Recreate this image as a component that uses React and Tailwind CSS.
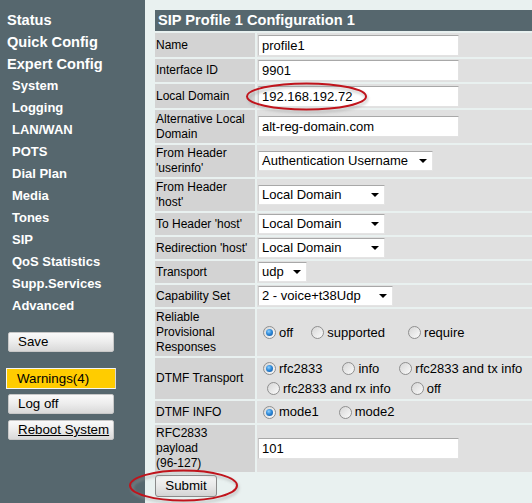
import React from "react";

const navTop = "h-[22px] leading-[22px] pl-[7px] text-[14.6px] font-bold text-white";
const navSub = "h-[22px] leading-[22px] pl-[12px] text-[13px] font-bold text-white";

function SideButton({ children, underline }) {
  return (
    <div className="ml-[8px] w-[106px] h-[20px] rounded-[2px] border border-[#c8c8c8] bg-gradient-to-b from-[#fafafa] via-[#ececec] to-[#d9d9d9] pl-[9px] text-[13.33px] leading-[18px] text-black">
      <span className={underline ? "underline" : ""}>{children}</span>
    </div>
  );
}

function Input({ value, w = "w-[201px]" }) {
  return (
    <div className={`${w} h-[21px] bg-white border border-[#e2e2e2] border-t-[#a8a8a8] border-l-[#c9c9c9] pl-[3px] text-[13px] leading-[19px] text-black`}>
      {value}
    </div>
  );
}

function Select({ value, w }) {
  return (
    <div className={`${w} h-[20px] bg-white border border-[#e4e4e4] border-t-[#a8a8a8] border-l-[#cfcfcf] pl-[3px] pr-[5px] flex items-center justify-between text-[13px] text-black`}>
      <span className="leading-[18px] whitespace-nowrap">{value}</span>
      <svg width="8" height="4" viewBox="0 0 8 4" className="shrink-0">
        <path d="M0 0 L8 0 L4 4 Z" fill="#000" />
      </svg>
    </div>
  );
}

function Radio({ checked, label, className = "" }) {
  return (
    <span className={`inline-flex items-center whitespace-nowrap ${className}`}>
      <span className="ml-[5px] mr-[3px] w-[13px] h-[13px] rounded-full border border-[#8f8f8f] bg-gradient-to-br from-[#d6d6d6] to-[#fbfbfb] flex items-center justify-center shrink-0">
        {checked && (
          <span className="w-[7px] h-[7px] rounded-full bg-[radial-gradient(circle_at_40%_35%,#8fd0ff_0%,#2f8ad8_45%,#0f4f9a_100%)]" />
        )}
      </span>
      <span className="text-[13px] text-black leading-[16px]">{label}</span>
    </span>
  );
}

function Row({ h, label, children }) {
  return (
    <>
      <div className={`${h} bg-[#d3d3d3] pl-[1px] pr-[2px] flex items-center text-[12px] leading-[15px] text-black`}>
        <div>{label}</div>
      </div>
      <div className={`${h} bg-[#e0e0e0] pl-[1px] flex items-center`}>{children}</div>
    </>
  );
}

export default function App() {
  return (
    <div className="relative w-[532px] h-[503px] overflow-hidden flex font-['Liberation_Sans',Arial,sans-serif]">
      <aside className="w-[145px] shrink-0 bg-[#56676e] pt-[9px]">
        <div className={navTop}>Status</div>
        <div className={navTop}>Quick Config</div>
        <div className={navTop}>Expert Config</div>
        <div className={navSub}>System</div>
        <div className={navSub}>Logging</div>
        <div className={navSub}>LAN/WAN</div>
        <div className={navSub}>POTS</div>
        <div className={navSub}>Dial Plan</div>
        <div className={navSub}>Media</div>
        <div className={navSub}>Tones</div>
        <div className={navSub}>SIP</div>
        <div className={navSub}>QoS Statistics</div>
        <div className={navSub}>Supp.Services</div>
        <div className={navSub}>Advanced</div>
        <div className="mt-[15px]">
          <SideButton>Save</SideButton>
        </div>
        <div className="mt-[16px] ml-[6px] w-[110px] h-[21px] bg-[#ffcc00] border border-[#f4f4f4] border-r-[#d8d8d8] pl-[10px] text-[13.33px] leading-[19px] text-black">
          Warnings(4)
        </div>
        <div className="mt-[5px]">
          <SideButton>Log off</SideButton>
        </div>
        <div className="mt-[6px]">
          <SideButton underline>Reboot System</SideButton>
        </div>
      </aside>

      <main className="flex-1 bg-[#e9f1f0] pl-[10px] pt-[10px]">
        <div className="grid grid-cols-[100px_1fr] gap-[2px]">
          <div className="col-span-2 h-[21px] bg-[#56676e] pl-[3px] text-[14.6px] font-bold text-white leading-[21px] whitespace-nowrap">
            SIP Profile 1 Configuration 1
          </div>
          <Row h="h-[24px]" label="Name"><Input value="profile1" /></Row>
          <Row h="h-[23px]" label="Interface ID"><Input value="9901" /></Row>
          <Row h="h-[24px]" label="Local Domain"><Input value="192.168.192.72" /></Row>
          <Row h="h-[33px]" label="Alternative Local Domain"><Input value="alt-reg-domain.com" /></Row>
          <Row h="h-[32px]" label={<>From Header<br />'userinfo'</>}>
            <Select value="Authentication Username" w="w-[175px]" />
          </Row>
          <Row h="h-[32px]" label={<>From Header<br />'host'</>}>
            <Select value="Local Domain" w="w-[127px]" />
          </Row>
          <Row h="h-[22px]" label="To Header 'host'">
            <Select value="Local Domain" w="w-[127px]" />
          </Row>
          <Row h="h-[22px]" label="Redirection 'host'">
            <Select value="Local Domain" w="w-[127px]" />
          </Row>
          <Row h="h-[22px]" label="Transport">
            <Select value="udp" w="w-[49px]" />
          </Row>
          <Row h="h-[22px]" label="Capability Set">
            <Select value="2 - voice+t38Udp" w="w-[135px]" />
          </Row>
          <Row h="h-[47px]" label={<>Reliable<br />Provisional<br />Responses</>}>
            <div className="flex items-center gap-[13px]">
              <Radio checked label="off" />
              <Radio label="supported" />
              <Radio label="require" className="ml-[5px]" />
            </div>
          </Row>
          <Row h="h-[41px]" label="DTMF Transport">
            <div className="flex flex-col">
              <div className="flex items-center h-[20px] gap-[15px]">
                <Radio checked label="rfc2833" />
                <Radio label="info" />
                <Radio label="rfc2833 and tx info" />
              </div>
              <div className="flex items-center h-[20px] gap-[15px] pl-[4px]">
                <Radio label="rfc2833 and rx info" />
                <Radio label="off" />
              </div>
            </div>
          </Row>
          <Row h="h-[22px]" label="DTMF INFO">
            <div className="flex items-center gap-[15px]">
              <Radio checked label="mode1" />
              <Radio label="mode2" />
            </div>
          </Row>
          <Row h="h-[47px]" label={<>RFC2833<br />payload<br />(96-127)</>}>
            <Input value="101" />
          </Row>
        </div>
        <div className="mt-[3px] w-[62px] h-[22px] rounded-[3px] border border-[#8a8a8a] bg-gradient-to-b from-[#f6f6f6] via-[#e8e8e8] to-[#d4d4d4] text-center text-[13.33px] leading-[20px] text-black">
          Submit
        </div>
      </main>

      <svg className="absolute inset-0 pointer-events-none" width="532" height="503" viewBox="0 0 532 503">
        <defs>
          <filter id="sh" x="-20%" y="-50%" width="140%" height="200%">
            <feGaussianBlur stdDeviation="1.5" />
          </filter>
        </defs>
        <ellipse cx="308" cy="99" rx="59" ry="13" fill="none" stroke="#9a9a9a" strokeWidth="2" opacity="0.6" filter="url(#sh)" />
        <ellipse cx="306.5" cy="96.5" rx="59.5" ry="13" fill="none" stroke="#c0141c" strokeWidth="2" />
        <ellipse cx="185" cy="488" rx="53" ry="15" fill="none" stroke="#9a9a9a" strokeWidth="2" opacity="0.6" filter="url(#sh)" />
        <ellipse cx="183.5" cy="485.5" rx="53.5" ry="15" fill="none" stroke="#c0141c" strokeWidth="2" />
      </svg>
    </div>
  );
}
